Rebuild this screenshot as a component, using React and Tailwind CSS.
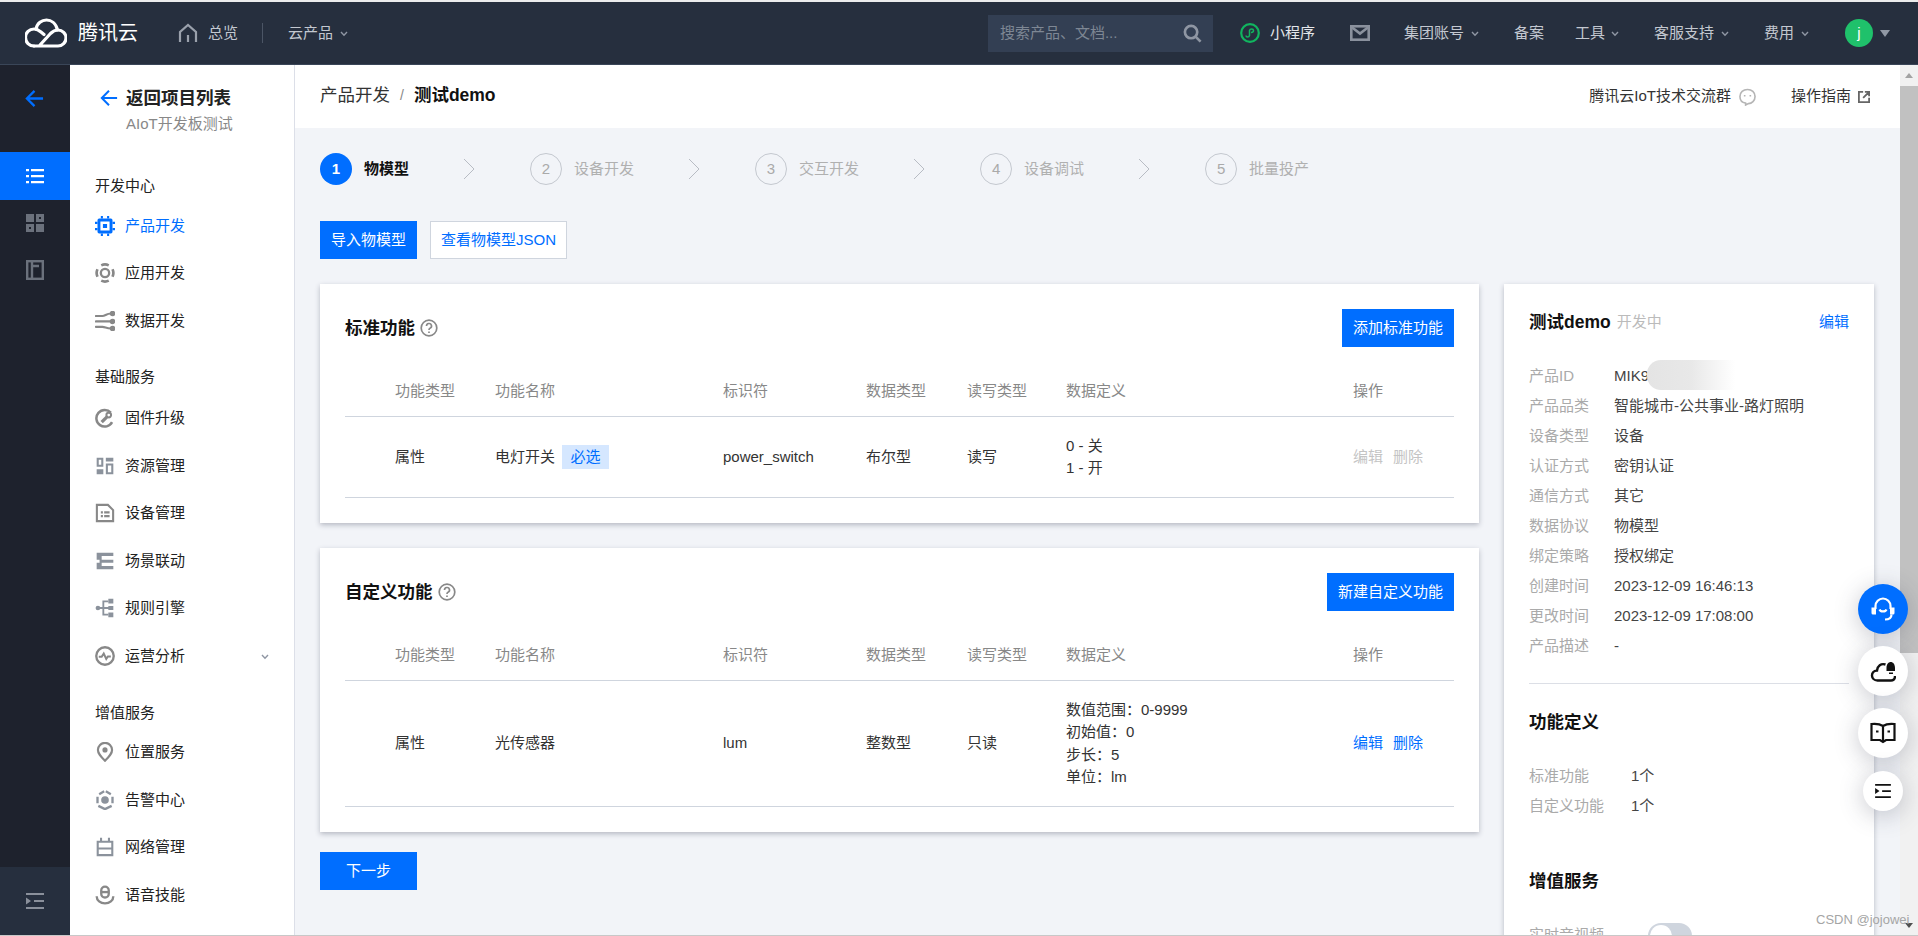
const Chev = ({ className = 'ml-[7px]' }) => (
  <svg viewBox="0 0 8 6" className={`${className} w-[8px] h-[6px] mt-[2px] shrink-0`} fill="none" stroke="#8f96a3" strokeWidth="1.4">
    <path d="M1 1l3 3.2L7 1" />
  </svg>
);

const Logo = () => (
  <svg viewBox="0 0 42 30" className="w-[42px] h-[30px]" fill="none" stroke="#fff" strokeWidth="3.2" strokeLinecap="round">
    <path d="M9 28h24a8 8 0 0 0 0-16c-3 0-5.500 1.500-7.500 3.500L15 27" />
    <path d="M9 28a8.500 8.500 0 0 1 0-17c3 0 5 1.300 7 3l3 2.500" />
    <path d="M11 11C12 5 17 2 21.500 2 26 2 31 5 32.500 12" />
  </svg>
);

const sideIcons = {
  chip: (
    <g>
      <path fill="#006eff" d="M5 3h14a2 2 0 0 1 2 2v14a2 2 0 0 1-2 2H5a2 2 0 0 1-2-2V5a2 2 0 0 1 2-2zm1.500 3.500v11h11v-11z" />
      <path fill="#006eff" d="M7 0h2.500v3H7zM14.500 0H17v3h-2.500zM7 21h2.500v3H7zM14.500 21H17v3h-2.500zM0 7h3v2.500H0zM0 14.500h3V17H0zM21 7h3v2.500h-3zM21 14.500h3V17h-3zM9.500 9.500h5v5h-5z" />
    </g>
  ),
  ring: (
    <g fill="none" stroke="#888">
      <circle cx="12" cy="12" r="5" strokeWidth="2.800" />
      <path strokeWidth="3.200" d="M3 7.500A10.500 10.500 0 0 0 3 16.500M21 7.500a10.500 10.500 0 0 1 0 9M7.500 2.800a10.500 10.500 0 0 1 9 0M7.500 21.200a10.500 10.500 0 0 0 9 0" />
    </g>
  ),
  flow: (
    <g fill="none" stroke="#888" strokeWidth="2.600" strokeLinecap="round">
      <path d="M1 6h8c3 0 5-3 10-3M1 12.500h19M1 19h8c3 0 5 2 10 2" />
      <circle cx="21" cy="3" r="2" fill="#888" />
      <circle cx="21" cy="12.500" r="2" fill="#888" />
      <circle cx="21" cy="21" r="2" fill="#888" />
    </g>
  ),
  wrench: (
    <g fill="none" stroke="#888" strokeWidth="3">
      <path d="M19 5.500A10 10 0 1 0 20.500 17" />
      <path strokeWidth="4" d="M8 17l7-7" />
      <circle cx="16.500" cy="8.500" r="2.800" strokeWidth="2.400" />
    </g>
  ),
  blocks: <path fill="#8b929c" d="M2 2h8v11H2zm2.500 2.500v6h3v-6zM13 2h9v4.500h-9zM13 9h9v13h-9zm2.500 2.500v8h4v-8zM2 16h8v6H2z" />,
  device: (
    <g>
      <path fill="#888" fillRule="evenodd" d="M1 1h15l7 7v15H1zm2.500 2.500v17h17V9l-5.500-5.500z" />
      <path fill="#888" d="M7 10h2.500v2.500H7zM11 10h6.500v2.500H11zM7 14.500h2.500V17H7zM11 14.500h6.500V17H11z" />
    </g>
  ),
  scene: <path fill="#8b929c" fillRule="evenodd" d="M2 2h20v4H8v4.500h14V14H8v4h14v4H2v-8h3.500v-3.500H2v-4.500h3.500V6H2z" />,
  rule: (
    <g>
      <path fill="none" stroke="#8b929c" strokeWidth="2.200" d="M4 12h13M10 12V4h6M10 12v8h6" />
      <circle cx="3.500" cy="12" r="2.800" fill="#8b929c" />
      <path fill="#8b929c" d="M16 1h6v5.500h-6zM16 9.500h6v5h-6zM16 17.500h6V23h-6z" />
    </g>
  ),
  pulse: (
    <g fill="none" stroke="#888" strokeWidth="2.800">
      <circle cx="12" cy="12" r="10.500" />
      <path strokeWidth="2.400" d="M4.500 13H8l2.500-4 3 6.500 2-3h3.500" />
    </g>
  ),
  pin: (
    <g fill="none" stroke="#888" strokeWidth="2.600">
      <path d="M12 22.500C7 17.500 3.500 14 3.500 9.500a8.500 8.500 0 0 1 17 0C20.500 14 17 17.500 12 22.500z" />
      <circle cx="12" cy="9.500" r="1.800" fill="#888" />
    </g>
  ),
  hex: (
    <g>
      <path fill="none" stroke="#8b929c" strokeWidth="2.800" d="M3 8v8M21 8v8M5 5l6-3.500M19 5l-6-3.500M4 19l8 4 8-4" />
      <circle cx="12" cy="12" r="4.600" fill="#8b929c" />
    </g>
  ),
  net: <path fill="#8b929c" fillRule="evenodd" d="M6 1h2.500v3.500h7V1H18v3.500h4V23H2V4.500h4zM4.500 7v5.500h15V7zm0 8V20.500h15V15z" />,
  mic: (
    <g fill="none" stroke="#888" strokeWidth="2.800">
      <rect x="7.500" y="2" width="9" height="13" rx="4.500" />
      <path d="M7.500 8.500h9" />
      <path d="M2 13.500c0 5 4.500 8.500 10 8.500s10-3.500 10-8.500" />
    </g>
  ),
};

const SideIcon = ({ name }) => (
  <svg viewBox="0 0 24 24" className="w-[20px] h-[20px] shrink-0">{sideIcons[name]}</svg>
);

const navGroups = [
  {
    title: '开发中心',
    mt: 'mt-[41px]',
    listMt: 'mt-[6px]',
    items: [
      { icon: 'chip', label: '产品开发', active: true },
      { icon: 'ring', label: '应用开发' },
      { icon: 'flow', label: '数据开发' },
    ],
  },
  {
    title: '基础服务',
    mt: 'mt-[22px]',
    listMt: 'mt-[8px]',
    items: [
      { icon: 'wrench', label: '固件升级' },
      { icon: 'blocks', label: '资源管理' },
      { icon: 'device', label: '设备管理' },
      { icon: 'scene', label: '场景联动' },
      { icon: 'rule', label: '规则引擎' },
      { icon: 'pulse', label: '运营分析', more: true },
    ],
  },
  {
    title: '增值服务',
    mt: 'mt-[23px]',
    listMt: 'mt-[6px]',
    items: [
      { icon: 'pin', label: '位置服务' },
      { icon: 'hex', label: '告警中心' },
      { icon: 'net', label: '网络管理' },
      { icon: 'mic', label: '语音技能' },
    ],
  },
];

const TopBar = () => (
  <div className="h-[63px] bg-[#262f3e] border-b border-[#3a4658] flex items-center pl-[25px] pr-[28px] text-[15px] text-[#c3c8d0] shrink-0">
    <Logo />
    <span className="ml-[11px] text-[20px] text-white">腾讯云</span>
    <svg viewBox="0 0 20 20" className="ml-[40px] w-[20px] h-[20px]" fill="none" stroke="#9aa1ac" strokeWidth="2.200">
      <path d="M2 19V9l8-7 8 7v10M10 19v-7" />
    </svg>
    <span className="ml-[10px]">总览</span>
    <span className="ml-[24px] w-px h-[20px] bg-[#4b5565]" />
    <span className="ml-[25px]">云产品</span>
    <Chev />
    <div className="ml-auto w-[225px] h-[37px] bg-[#333f53] flex items-center justify-between pl-[12px] pr-[11px]">
      <span className="text-[#7e8794]">搜索产品、文档...</span>
      <svg viewBox="0 0 20 20" className="w-[19px] h-[19px]" fill="none" stroke="#8f96a3" strokeWidth="2.800">
        <circle cx="8.500" cy="8.500" r="6.500" />
        <path d="M13 13l5.500 5.500" />
      </svg>
    </div>
    <svg viewBox="0 0 20 20" className="ml-[27px] w-[20px] h-[20px]" fill="none" stroke="#11b55f" strokeWidth="2.200">
      <circle cx="10" cy="10" r="8.800" />
      <path strokeWidth="1.500" d="M6 12.500c0 2 3 2 3.500 0V7.500c.500-2 4-2 4 0 0 1.500-1.500 2-2.500 2" />
    </svg>
    <span className="ml-[10px] text-[#e3e6ea]">小程序</span>
    <svg viewBox="0 0 20 16" className="ml-[35px] w-[20px] h-[16px]" fill="none" stroke="#8a919d" strokeWidth="2.600">
      <rect x="1.300" y="1.300" width="17.400" height="13.400" />
      <path d="M1.500 2l8.500 6.500L18.500 2" />
    </svg>
    <span className="ml-[34px]">集团账号</span>
    <Chev />
    <span className="ml-[35px]">备案</span>
    <span className="ml-[31px]">工具</span>
    <Chev className="ml-[6px]" />
    <span className="ml-[35px]">客服支持</span>
    <Chev />
    <span className="ml-[35px]">费用</span>
    <Chev />
    <span className="ml-[36px] w-[28px] h-[28px] rounded-full bg-[#1fc16b] text-white flex items-center justify-center">j</span>
    <span className="ml-[7px] w-0 h-0 border-x-[5px] border-x-transparent border-t-[7px] border-t-[#9199a5]" />
  </div>
);

const Rail = () => (
  <div className="w-[70px] bg-[#1e222d] flex flex-col shrink-0">
    <div className="h-[87px] flex items-center justify-center pb-[20px] pr-[2px]">
      <svg viewBox="0 0 20 20" className="w-[19px] h-[19px]" fill="none" stroke="#006eff" strokeWidth="2.400">
        <path d="M19 10H2M10 2l-8 8 8 8" />
      </svg>
    </div>
    <div className="h-[48px] bg-[#006eff] flex items-center justify-center">
      <svg viewBox="0 0 18 16" className="w-[18px] h-[16px]" fill="#fff">
        <path d="M0 1h3v2.200H0zM5 1h13v2.200H5zM0 7h3v2.200H0zM5 7h13v2.200H5zM0 13h3v2.200H0zM5 13h13v2.200H5z" />
      </svg>
    </div>
    <div className="h-[46px] flex items-center justify-center">
      <svg viewBox="0 0 18 18" className="w-[18px] h-[18px]" fill="#6b717c">
        <path d="M0 0h8v8H0zM10 0h8v8h-8zM0 10h8v8H0zM10 10h8v8h-8z" />
        <path fill="#1e222d" d="M13 3h2v2h-2zM3 13h2v2H3z" />
      </svg>
    </div>
    <div className="h-[48px] flex items-center justify-center">
      <svg viewBox="0 0 18 20" className="w-[18px] h-[20px]" fill="none" stroke="#6b717c" strokeWidth="2.400">
        <rect x="1.200" y="1.200" width="15.600" height="17.600" />
        <path d="M6 1v18M6 6h7" />
      </svg>
    </div>
    <div className="mt-auto h-[68px] bg-[#262f3e] flex items-center justify-center">
      <svg viewBox="0 0 18 16" className="w-[18px] h-[16px]" fill="#8a909b">
        <path d="M0 0h18v2H0zM8 7h10v2H8zM0 14h18v2H0zM0 4.500L5 8l-5 3.500z" />
      </svg>
    </div>
  </div>
);

const Sidebar = () => (
  <div className="w-[225px] bg-white border-r border-[#dcdfe8] pt-[22px] shrink-0">
    <div className="h-[22px] flex items-center pl-[30px]">
      <svg viewBox="0 0 20 20" className="w-[18px] h-[18px]" fill="none" stroke="#006eff" strokeWidth="2.200">
        <path d="M19 10H2M10 2l-8 8 8 8" />
      </svg>
      <span className="ml-[8px] text-[17.500px] font-bold text-[#222]">返回项目列表</span>
    </div>
    <div className="mt-[4px] h-[22px] leading-[22px] pl-[56px] text-[15px] text-[#888]">AIoT开发板测试</div>
    {navGroups.map((group) => (
      <div key={group.title} className={group.mt}>
        <div className="h-[20px] leading-[20px] pl-[25px] text-[15px] text-[#222]">{group.title}</div>
        <div className={group.listMt}>
          {group.items.map((item) => (
            <div key={item.label} className="h-[47.500px] flex items-center pl-[25px] pr-[25px] text-[15px]">
              <SideIcon name={item.icon} />
              <span className={item.active ? 'ml-[10px] text-[#006eff]' : 'ml-[10px] text-[#222]'}>{item.label}</span>
              {item.more && <Chev className="ml-auto" />}
            </div>
          ))}
        </div>
      </div>
    ))}
  </div>
);

const steps = ['物模型', '设备开发', '交互开发', '设备调试', '批量投产'];

const Steps = () => (
  <div className="mt-[25px] flex items-center h-[32px]">
    {steps.map((label, i) => (
      <div key={label} className="flex items-center">
        <span
          className={
            i === 0
              ? 'w-[32px] h-[32px] rounded-full bg-[#006eff] text-white font-bold text-[15px] flex items-center justify-center'
              : 'w-[32px] h-[32px] rounded-full border border-[#c4c8cf] text-[#aaa] text-[15px] flex items-center justify-center'
          }
        >
          {i + 1}
        </span>
        <span className={i === 0 ? 'ml-[12px] text-[15px] font-bold text-[#111]' : 'ml-[12px] text-[15px] text-[#b0b0b0]'}>{label}</span>
        {i < 4 && (
          <svg viewBox="0 0 12 22" className="ml-[54px] mr-[55px] w-[12px] h-[22px]" fill="none" stroke="#b8bcc4" strokeWidth="1">
            <path d="M1 1l10 10L1 21" />
          </svg>
        )}
      </div>
    ))}
  </div>
);

const gridCols = 'grid grid-cols-[150px_228px_143px_101px_99px_287px_101px]';

const Help = () => (
  <svg viewBox="0 0 18 18" className="ml-[5px] w-[18px] h-[18px]" fill="none" stroke="#888" strokeWidth="1.700">
    <circle cx="9" cy="9" r="7.800" />
    <path d="M6.500 7a2.500 2.500 0 1 1 3.500 2.300c-.700.300-1 .700-1 1.700" />
    <path d="M9 12.500v1.500" />
  </svg>
);

const Card = ({ title, action, kind, name, tag, id, type, rw, defs, rowClass, disabled }) => (
  <div className="bg-white shadow-[0_2px_5px_rgba(54,58,80,0.32)] px-[25px] pb-[25px]">
    <div className="h-[88px] flex items-center justify-between">
      <div className="flex items-center">
        <span className="text-[17.500px] font-bold text-[#111]">{title}</span>
        <Help />
      </div>
      <button className="h-[38px] px-[11px] bg-[#006eff] text-white text-[15px]">{action}</button>
    </div>
    <div className={`${gridCols} h-[45px] pb-[5px] items-center border-b border-[#cfd5de] text-[15px] text-[#888]`}>
      <span className="pl-[50px]">功能类型</span>
      <span>功能名称</span>
      <span>标识符</span>
      <span>数据类型</span>
      <span>读写类型</span>
      <span>数据定义</span>
      <span>操作</span>
    </div>
    <div className={`${gridCols} ${rowClass} items-center border-b border-[#cfd5de] text-[15px] text-[#333]`}>
      <span className="pl-[50px]">{kind}</span>
      <span className="flex items-center">
        {name}
        {tag && <span className="ml-[7px] h-[24px] w-[47px] bg-[#d5e7ff] text-[#006eff] flex items-center justify-center">{tag}</span>}
      </span>
      <span>{id}</span>
      <span>{type}</span>
      <span>{rw}</span>
      <div className="leading-[22.300px]">
        {defs.map((d) => (
          <div key={d}>{d}</div>
        ))}
      </div>
      <span className={disabled ? 'text-[#c4c4c4]' : 'text-[#006eff]'}>
        编辑<span className="ml-[10px]">删除</span>
      </span>
    </div>
  </div>
);

const info = [
  ['产品ID', 'MIK9'],
  ['产品品类', '智能城市-公共事业-路灯照明'],
  ['设备类型', '设备'],
  ['认证方式', '密钥认证'],
  ['通信方式', '其它'],
  ['数据协议', '物模型'],
  ['绑定策略', '授权绑定'],
  ['创建时间', '2023-12-09 16:46:13'],
  ['更改时间', '2023-12-09 17:08:00'],
  ['产品描述', '-'],
];

const InfoPanel = () => (
  <div className="relative w-[370px] h-[700px] shrink-0 bg-white shadow-[0_2px_5px_rgba(54,58,80,0.32)] pt-[27px] px-[25px] text-[15px]">
    <div className="h-[22px] flex items-center">
      <span className="text-[17.500px] font-bold text-[#111]">测试demo</span>
      <span className="ml-[6px] text-[#bbb]">开发中</span>
      <span className="ml-auto text-[#006eff]">编辑</span>
    </div>
    <div className="mt-[28px]">
      {info.map(([k, v]) => (
        <div key={k} className="h-[30px] flex items-center">
          <span className="w-[85px] text-[#aaa]">{k}</span>
          <span className="text-[#444]">{v}</span>
        </div>
      ))}
    </div>
    <div className="mt-[22px] border-t border-[#dcdfe6]" />
    <div className="mt-[26px] h-[24px] leading-[24px] text-[17.500px] font-bold text-[#111]">功能定义</div>
    <div className="mt-[27px]">
      {[['标准功能', '1个'], ['自定义功能', '1个']].map(([k, v]) => (
        <div key={k} className="h-[30px] flex items-center">
          <span className="w-[102px] text-[#aaa]">{k}</span>
          <span className="text-[#444]">{v}</span>
        </div>
      ))}
    </div>
    <div className="mt-[48px] h-[24px] leading-[24px] text-[17.500px] font-bold text-[#111]">增值服务</div>
    <div className="mt-[26px] h-[30px] flex items-start">
      <span className="w-[119px] mt-[5px] text-[#aaa]">实时音视频</span>
      <span className="w-[44px] h-[26px] mt-[4px] rounded-full bg-[#cfd5de] p-[2px]">
        <span className="block w-[22px] h-[22px] rounded-full bg-white" />
      </span>
    </div>
    <div className="absolute left-[143px] top-[76px] w-[88px] h-[30px] rounded-l-[14px] bg-gradient-to-r from-[#e4e4e4] via-[#e8e8e8] to-white" />
  </div>
);

const floatShadow = 'shadow-[0_4px_24px_rgba(54,58,80,0.28)]';

const Floats = () => (
  <div className="absolute left-[1858px] top-[584px] flex flex-col items-center">
    <div className={`w-[50px] h-[50px] rounded-full bg-[#006eff] flex items-center justify-center ${floatShadow}`}>
      <svg viewBox="0 0 26 26" className="w-[26px] h-[26px]" fill="none" stroke="#fff" strokeWidth="2.200">
        <path d="M5.500 13V10a7.500 7.500 0 0 1 15 0v3" />
        <path fill="#fff" stroke="none" d="M1.500 11.500h4.500v7H3a1.500 1.500 0 0 1-1.500-1.500zM20 11.500h4.500V17a1.500 1.500 0 0 1-1.500 1.500h-3z" />
        <path d="M9.500 13.500c1 2.500 6 2.500 7 0M21.500 18.500c0 3-2 5-6.500 5" />
      </svg>
    </div>
    <div className={`mt-[12px] w-[50px] h-[50px] rounded-full bg-white flex items-center justify-center ${floatShadow}`}>
      <svg viewBox="0 0 26 24" className="w-[26px] h-[24px]" fill="none" stroke="#111" strokeWidth="2.400">
        <path d="M15.500 5.500C11 4 7.500 7 7 11.500c-7 .500-6.500 10 .500 10H21c3 0 4-2 4-4.500" />
        <path fill="#111" stroke="none" d="M16.500 9c0-8 8.500-8 8.500 0v3h-8.500zM19 13.500h4V15h-4z" />
      </svg>
    </div>
    <div className={`mt-[12px] w-[50px] h-[50px] rounded-full bg-white flex items-center justify-center ${floatShadow}`}>
      <svg viewBox="0 0 26 22" className="w-[26px] h-[22px]" fill="none" stroke="#111" strokeWidth="2.200">
        <path d="M13 4C10 2 6 1.500 1.500 2v16H10l3 2 3-2h8.500V2C20 1.500 16 2 13 4zM13 4v15" />
        <path strokeWidth="2" d="M6 9.500h2.500M17.500 9.500H20" />
      </svg>
    </div>
    <div className={`mt-[13px] w-[40px] h-[40px] rounded-full bg-white flex items-center justify-center ${floatShadow}`}>
      <svg viewBox="0 0 18 16" className="w-[16px] h-[14px]" fill="#111">
        <path d="M0 0h18v2H0zM8 7h10v2H8zM0 14h18v2H0zM0 4.500L5 8l-5 3.500z" />
      </svg>
    </div>
  </div>
);

const ScrollBar = () => (
  <div className="w-[18px] bg-[#f1f1f1] shrink-0 flex flex-col items-center">
    <div className="h-[21px] flex items-center">
      <span className="w-0 h-0 border-x-[4px] border-x-transparent border-b-[5px] border-b-[#a3a3a3]" />
    </div>
    <div className="w-full h-[567px] bg-[#c1c1c1]" />
    <div className="mt-auto mb-[7px] w-0 h-0 border-x-[4px] border-x-transparent border-t-[5px] border-t-[#505050]" />
  </div>
);

export default function App() {
  return (
    <div className="relative w-[1918px] h-[936px] overflow-hidden bg-[#f2f4f8] font-['Liberation_Sans','Noto_Sans_CJK_SC',sans-serif]">
      <div className="h-[2px] bg-[#ececec]" />
      <TopBar />
      <div className="flex h-[870px]">
        <Rail />
        <Sidebar />
        <div className="flex-1 min-w-0 overflow-hidden flex flex-col">
          <div className="h-[63px] bg-white flex items-center justify-between pl-[25px] pr-[30px] shrink-0">
            <div className="flex items-center text-[17.500px] mb-[3px]">
              <span className="text-[#333]">产品开发</span>
              <span className="mx-[10px] text-[14px] text-[#888]">/</span>
              <span className="font-bold text-[#111]">测试demo</span>
            </div>
            <div className="flex items-center text-[15px] text-[#333]">
              <span>腾讯云IoT技术交流群</span>
              <svg viewBox="0 0 18 18" className="ml-[8px] w-[17px] h-[18px]" fill="none" stroke="#b5b5b5" strokeWidth="1.700">
                <path d="M9 1c4.500 0 8 3 8 7.500S13.500 16 10 16l-3 1.500V15.500C3.500 15 1 12.500 1 8.500 1 4 4.500 1 9 1z" />
                <path d="M6 7v1.500M12 7v1.500" />
              </svg>
              <span className="ml-[35px]">操作指南</span>
              <svg viewBox="0 0 14 14" className="ml-[7px] w-[12px] h-[12px]" fill="none" stroke="#666" strokeWidth="2.200">
                <path d="M6 1H1v12h12V8M8 1h5v5M13 1L6 8" />
              </svg>
            </div>
          </div>
          <div className="pl-[25px]">
            <Steps />
            <div className="mt-[36px] flex gap-[13px]">
              <button className="w-[97px] h-[38px] bg-[#006eff] text-white text-[15px]">导入物模型</button>
              <button className="w-[137px] h-[38px] bg-white border border-[#cfd5de] text-[#006eff] text-[15px]">查看物模型JSON</button>
            </div>
            <div className="mt-[25px] flex gap-[25px] items-start">
              <div className="w-[1159px] shrink-0">
                <Card
                  title="标准功能"
                  action="添加标准功能"
                  kind="属性"
                  name="电灯开关"
                  tag="必选"
                  id="power_switch"
                  type="布尔型"
                  rw="读写"
                  defs={['0 - 关', '1 - 开']}
                  rowClass="h-[81px]"
                  disabled
                />
                <div className="mt-[25px]">
                  <Card
                    title="自定义功能"
                    action="新建自定义功能"
                    kind="属性"
                    name="光传感器"
                    id="lum"
                    type="整数型"
                    rw="只读"
                    defs={['数值范围：0-9999', '初始值：0', '步长：5', '单位：lm']}
                    rowClass="h-[126px]"
                  />
                </div>
                <button className="mt-[20px] w-[97px] h-[38px] bg-[#006eff] text-white text-[15px]">下一步</button>
              </div>
              <InfoPanel />
            </div>
          </div>
        </div>
        <ScrollBar />
      </div>
      <div className="h-px bg-[#c8c8c8]" />
      <Floats />
      <div className="absolute left-[1816px] top-[910px] text-[13px] text-[#a5a5a5]">CSDN @jojowei</div>
    </div>
  );
}
